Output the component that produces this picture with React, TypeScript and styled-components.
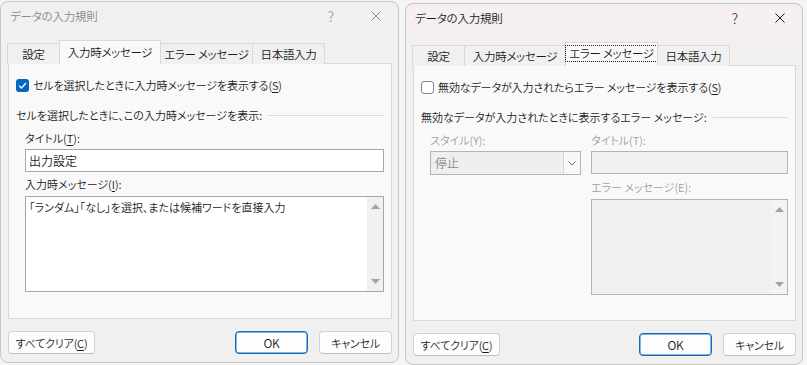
import React from "react";
import styled, { createGlobalStyle, css } from "styled-components";

const GlobalStyle = createGlobalStyle`
  html, body { margin: 0; padding: 0; }
  body {
    background: #f4f4f4;
    font-family: "Noto Sans CJK JP", "Noto Sans", sans-serif;
    font-size: 11px;
    font-weight: 350;
    font-feature-settings: "palt";
    color: #1b1b1b;
    white-space: nowrap;
  }
`;

const Screen = styled.div`
  width: 807px;
  height: 365px;
  display: flex;
  gap: 6px;
  overflow: hidden;
`;

const Dialog = styled.div<{ $active?: boolean; $top: number; $width: number }>`
  width: ${p => p.$width}px;
  height: 362px;
  margin-top: ${p => p.$top}px;
  box-sizing: border-box;
  border: 1px solid #c6c6c6;
  border-radius: 8px;
  background: #f0f0f0;
  display: flex;
  flex-direction: column;
  flex-shrink: 0;
  ${p => p.$active && css`
    background: linear-gradient(#f8eef1 0, #f3eff0 36px, #f0f0f0 70px);
  `}
`;

const TitleBar = styled.div<{ $active?: boolean }>`
  height: 28px;
  display: flex;
  align-items: center;
  padding-left: 9px;
  font-size: 11.5px;
  color: ${p => (p.$active ? "#1b1b1b" : "#8a8a8a")};
`;

const TitleText = styled.span`
  flex: 1;
  letter-spacing: -0.2px;
`;

const HelpMark = styled.span`
  width: 14px;
  text-align: center;
  font-size: 14px;
  font-weight: 300;
  margin-right: 33px;
`;

const CloseMark = styled.span`
  width: 10px;
  height: 10px;
  display: flex;
  margin-right: 17px;
`;

const TabStrip = styled.div`
  height: 24px;
  margin: 10px 0 -1px 7px;
  display: flex;
  align-items: flex-end;
  position: relative;
  z-index: 1;
`;

const Tab = styled.div<{ $w: number; $selected?: boolean }>`
  width: ${p => p.$w}px;
  height: 21px;
  box-sizing: border-box;
  border: 1px solid #d9d9d9;
  border-bottom: none;
  margin-left: -1px;
  display: flex;
  align-items: center;
  justify-content: center;
  font-size: 11.5px;
  letter-spacing: -0.3px;
  background: #f0f0f0;
  ${p => p.$selected && css`
    height: 24px;
    background: #f9f9f9;
    padding-bottom: 2px;
  `}
`;

const FocusText = styled.span`
  outline: 1px dotted #1b1b1b;
  padding: 0 3px;
  line-height: 15px;
`;

const Panel = styled.div`
  height: 256px;
  box-sizing: border-box;
  margin: 0 6px 0 7px;
  border: 1px solid #dadada;
  background: #f9f9f9;
  padding: 12px 7px 0 7px;
`;

const CheckRow = styled.div`
  height: 18px;
  display: flex;
  align-items: center;
  gap: 4px;
  letter-spacing: -0.1px;
`;

const CheckBox = styled.span<{ $checked?: boolean }>`
  width: 13px;
  height: 13px;
  box-sizing: border-box;
  border-radius: 3px;
  display: flex;
  align-items: center;
  justify-content: center;
  ${p => p.$checked
    ? css`background: #0067c0;`
    : css`background: #fdfdfd; border: 1px solid #858585;`}
`;

const Heading = styled.div`
  height: 18px;
  margin-top: 12px;
  display: flex;
  align-items: center;
  &::after {
    content: "";
    flex: 1;
    height: 1px;
    background: #dcdcdc;
    margin-left: 6px;
  }
`;

const Fields = styled.div`
  padding-left: 9px;
`;

const Columns = styled.div`
  padding-left: 9px;
  display: grid;
  grid-template-columns: 151px 197px;
  column-gap: 10px;
  align-items: start;
`;

const Label = styled.div<{ $disabled?: boolean; $gap?: number }>`
  height: 18px;
  line-height: 18px;
  margin-top: ${p => p.$gap ?? 5}px;
  color: ${p => (p.$disabled ? "#9f9f9f" : "#1b1b1b")};
`;

const TextBox = styled.div<{ $disabled?: boolean }>`
  height: 23px;
  box-sizing: border-box;
  margin-top: 2px;
  border: 1px solid ${p => (p.$disabled ? "#b4b4b4" : "#a6a6a6")};
  background: ${p => (p.$disabled ? "#f0f0f0" : "#ffffff")};
  padding: 0 3px;
  line-height: 21px;
  font-size: 12px;
`;

const TextArea = styled.div<{ $disabled?: boolean }>`
  height: 96px;
  box-sizing: border-box;
  margin-top: 3px;
  border: 1px solid ${p => (p.$disabled ? "#b4b4b4" : "#a6a6a6")};
  background: ${p => (p.$disabled ? "#f0f0f0" : "#ffffff")};
  display: flex;
`;

const AreaText = styled.div`
  flex: 1;
  padding: 2px 3px;
  line-height: 16px;
`;

const ScrollBar = styled.div<{ $disabled?: boolean }>`
  width: 16px;
  background: ${p => (p.$disabled ? "#f3f3f3" : "#f1f1f1")};
  display: flex;
  flex-direction: column;
  justify-content: space-between;
  align-items: center;
  padding: 7px 0;
`;

const Select = styled.div`
  height: 24px;
  box-sizing: border-box;
  margin-top: 2px;
  border: 1px solid #b4b4b4;
  background: #efefef;
  display: flex;
  color: #8a8a8a;
  font-size: 12px;
`;

const SelectValue = styled.div`
  flex: 1;
  padding-left: 4px;
  line-height: 22px;
`;

const SelectButton = styled.div`
  width: 16px;
  border-left: 1px solid #d8d8d8;
  background: #f8f8f8;
  display: flex;
  align-items: center;
  justify-content: center;
`;

const ButtonRow = styled.div`
  margin: 12px 6px 0 7px;
  display: flex;
  align-items: center;
`;

const Button = styled.div<{ $w: number; $primary?: boolean; $push?: boolean }>`
  width: ${p => p.$w}px;
  height: 23px;
  box-sizing: border-box;
  border: 1px solid #d2d2d2;
  border-bottom-color: #bdbdbd;
  border-radius: 4px;
  background: #fdfdfd;
  display: flex;
  align-items: center;
  justify-content: center;
  letter-spacing: -0.2px;
  margin-left: ${p => (p.$push ? "auto" : "11px")};
  &:first-child { margin-left: 0; }
  ${p => p.$primary && css`
    border: 1px solid #0f6cbd;
    box-shadow: inset 0 0 0 0.5px #0f6cbd;
    font-size: 12px;
  `}
`;

const Acc = styled.span`
  text-decoration: underline;
  text-underline-offset: 2px;
`;

const Check = () => (
  <svg width="9" height="7" viewBox="0 0 9 7">
    <path d="M1 3.6 L3.4 6 L8 1" fill="none" stroke="#fff" strokeWidth="1.3" />
  </svg>
);

const Cross = () => (
  <svg width="10" height="10" viewBox="0 0 10 10">
    <path d="M0.5 0.5 L9.5 9.5 M9.5 0.5 L0.5 9.5" stroke="currentColor" strokeWidth="1" />
  </svg>
);

const Arrow = ({ up }: { up?: boolean }) => (
  <svg width="9" height="5" viewBox="0 0 9 5">
    <path d={up ? "M0 5 L4.5 0 L9 5 Z" : "M0 0 L4.5 5 L9 0 Z"} fill="#a3a3a3" />
  </svg>
);

const Chevron = () => (
  <svg width="8" height="5" viewBox="0 0 8 5">
    <path d="M0.5 0.5 L4 4 L7.5 0.5" fill="none" stroke="#6f6f6f" strokeWidth="1" />
  </svg>
);

const tabs: [string, number][] = [
  ["設定", 53],
  ["入力時メッセージ", 102],
  ["エラー メッセージ", 93],
  ["日本語入力", 73],
];

function Frame({ active, top, width, selected, children }: {
  active?: boolean; top: number; width: number; selected: number; children: React.ReactNode;
}) {
  return (
    <Dialog $active={active} $top={top} $width={width}>
      <TitleBar $active={active}>
        <TitleText>データの入力規則</TitleText>
        <HelpMark>?</HelpMark>
        <CloseMark><Cross /></CloseMark>
      </TitleBar>
      <TabStrip>
        {tabs.map(([name, w], i) => (
          <Tab key={name} $w={w} $selected={i === selected}>
            {active && i === selected ? <FocusText>{name}</FocusText> : name}
          </Tab>
        ))}
      </TabStrip>
      <Panel>{children}</Panel>
      <ButtonRow>
        <Button $w={87}>すべてクリア(<Acc>C</Acc>)</Button>
        <Button $w={73} $primary $push>OK</Button>
        <Button $w={73}>キャンセル</Button>
      </ButtonRow>
    </Dialog>
  );
}

export default function App() {
  return (
    <>
      <GlobalStyle />
      <Screen>
        <Frame top={1} width={399} selected={1}>
          <CheckRow>
            <CheckBox $checked><Check /></CheckBox>
            <span>セルを選択したときに入力時メッセージを表示する(<Acc>S</Acc>)</span>
          </CheckRow>
          <Heading>セルを選択したときに、この入力時メッセージを表示:</Heading>
          <Fields>
            <Label>タイトル(<Acc>T</Acc>):</Label>
            <TextBox>出力設定</TextBox>
            <Label $gap={3}>入力時メッセージ(<Acc>I</Acc>):</Label>
            <TextArea>
              <AreaText>「ランダム」「なし」を選択、または候補ワードを直接入力</AreaText>
              <ScrollBar><Arrow up /><Arrow /></ScrollBar>
            </TextArea>
          </Fields>
        </Frame>
        <Frame active top={3} width={398} selected={2}>
          <CheckRow>
            <CheckBox />
            <span>無効なデータが入力されたらエラー メッセージを表示する(<Acc>S</Acc>)</span>
          </CheckRow>
          <Heading>無効なデータが入力されたときに表示するエラー メッセージ:</Heading>
          <Columns>
            <div>
              <Label $disabled>スタイル(Y):</Label>
              <Select>
                <SelectValue>停止</SelectValue>
                <SelectButton><Chevron /></SelectButton>
              </Select>
            </div>
            <div>
              <Label $disabled>タイトル(T):</Label>
              <TextBox $disabled />
              <Label $disabled $gap={4}>エラー メッセージ(E):</Label>
              <TextArea $disabled>
                <AreaText />
                <ScrollBar $disabled><Arrow up /><Arrow /></ScrollBar>
              </TextArea>
            </div>
          </Columns>
        </Frame>
      </Screen>
    </>
  );
}
